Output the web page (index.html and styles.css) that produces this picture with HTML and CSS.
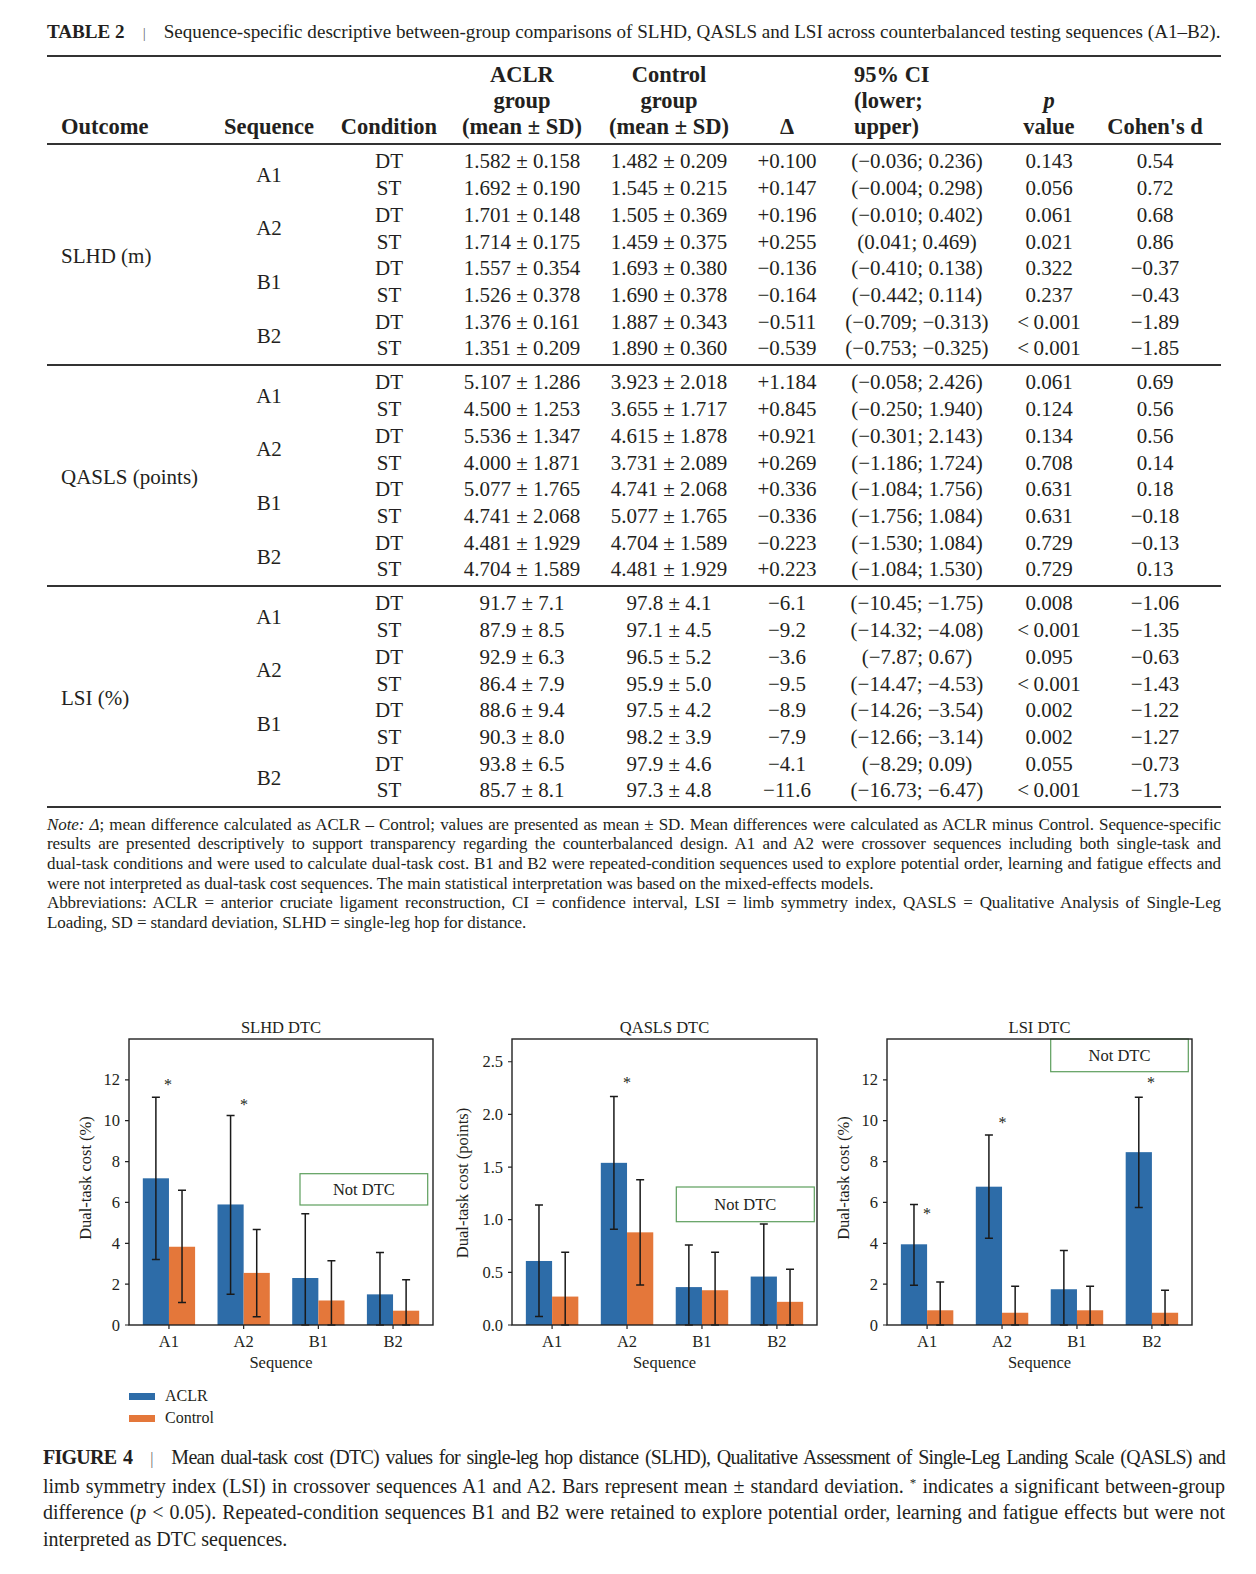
FILE: index.html
```html
<!DOCTYPE html>
<html lang="en">
<head>
<meta charset="utf-8">
<title>Table 2 and Figure 4</title>
<link rel="stylesheet" href="styles.css">
</head>
<body>
<div class="page">
  <section class="table-block">
    <p class="tcap"><b>TABLE 2</b><span class="bar">|</span>Sequence-specific descriptive between-group comparisons of SLHD, QASLS and LSI across counterbalanced testing sequences (A1–B2).</p>
    <table class="data">
      <colgroup>
        <col class="c-out"><col class="c-seq"><col class="c-cond"><col class="c-aclr"><col class="c-ctrl"><col class="c-delta"><col class="c-ci"><col class="c-p"><col class="c-d">
      </colgroup>
      <thead>
        <tr>
          <th class="left">Outcome</th>
          <th>Sequence</th>
          <th>Condition</th>
          <th>ACLR<br>group<br>(mean ± SD)</th>
          <th>Control<br>group<br>(mean ± SD)</th>
          <th>Δ</th>
          <th class="ci-h">95% CI<br>(lower;<br>upper)</th>
          <th><i>p</i><br>value</th>
          <th>Cohen's d</th>
        </tr>
      </thead>
      <tbody>
        <tr><td rowspan="8" class="left">SLHD (m)</td><td rowspan="2">A1</td><td>DT</td><td>1.582 ± 0.158</td><td>1.482 ± 0.209</td><td>+0.100</td><td>(−0.036; 0.236)</td><td>0.143</td><td>0.54</td></tr>
        <tr><td>ST</td><td>1.692 ± 0.190</td><td>1.545 ± 0.215</td><td>+0.147</td><td>(−0.004; 0.298)</td><td>0.056</td><td>0.72</td></tr>
        <tr><td rowspan="2">A2</td><td>DT</td><td>1.701 ± 0.148</td><td>1.505 ± 0.369</td><td>+0.196</td><td>(−0.010; 0.402)</td><td>0.061</td><td>0.68</td></tr>
        <tr><td>ST</td><td>1.714 ± 0.175</td><td>1.459 ± 0.375</td><td>+0.255</td><td>(0.041; 0.469)</td><td>0.021</td><td>0.86</td></tr>
        <tr><td rowspan="2">B1</td><td>DT</td><td>1.557 ± 0.354</td><td>1.693 ± 0.380</td><td>−0.136</td><td>(−0.410; 0.138)</td><td>0.322</td><td>−0.37</td></tr>
        <tr><td>ST</td><td>1.526 ± 0.378</td><td>1.690 ± 0.378</td><td>−0.164</td><td>(−0.442; 0.114)</td><td>0.237</td><td>−0.43</td></tr>
        <tr><td rowspan="2">B2</td><td>DT</td><td>1.376 ± 0.161</td><td>1.887 ± 0.343</td><td>−0.511</td><td>(−0.709; −0.313)</td><td>&lt;&#8201;0.001</td><td>−1.89</td></tr>
        <tr><td>ST</td><td>1.351 ± 0.209</td><td>1.890 ± 0.360</td><td>−0.539</td><td>(−0.753; −0.325)</td><td>&lt;&#8201;0.001</td><td>−1.85</td></tr>
      </tbody>
      <tbody>
        <tr><td rowspan="8" class="left">QASLS (points)</td><td rowspan="2">A1</td><td>DT</td><td>5.107 ± 1.286</td><td>3.923 ± 2.018</td><td>+1.184</td><td>(−0.058; 2.426)</td><td>0.061</td><td>0.69</td></tr>
        <tr><td>ST</td><td>4.500 ± 1.253</td><td>3.655 ± 1.717</td><td>+0.845</td><td>(−0.250; 1.940)</td><td>0.124</td><td>0.56</td></tr>
        <tr><td rowspan="2">A2</td><td>DT</td><td>5.536 ± 1.347</td><td>4.615 ± 1.878</td><td>+0.921</td><td>(−0.301; 2.143)</td><td>0.134</td><td>0.56</td></tr>
        <tr><td>ST</td><td>4.000 ± 1.871</td><td>3.731 ± 2.089</td><td>+0.269</td><td>(−1.186; 1.724)</td><td>0.708</td><td>0.14</td></tr>
        <tr><td rowspan="2">B1</td><td>DT</td><td>5.077 ± 1.765</td><td>4.741 ± 2.068</td><td>+0.336</td><td>(−1.084; 1.756)</td><td>0.631</td><td>0.18</td></tr>
        <tr><td>ST</td><td>4.741 ± 2.068</td><td>5.077 ± 1.765</td><td>−0.336</td><td>(−1.756; 1.084)</td><td>0.631</td><td>−0.18</td></tr>
        <tr><td rowspan="2">B2</td><td>DT</td><td>4.481 ± 1.929</td><td>4.704 ± 1.589</td><td>−0.223</td><td>(−1.530; 1.084)</td><td>0.729</td><td>−0.13</td></tr>
        <tr><td>ST</td><td>4.704 ± 1.589</td><td>4.481 ± 1.929</td><td>+0.223</td><td>(−1.084; 1.530)</td><td>0.729</td><td>0.13</td></tr>
      </tbody>
      <tbody>
        <tr><td rowspan="8" class="left">LSI (%)</td><td rowspan="2">A1</td><td>DT</td><td>91.7 ± 7.1</td><td>97.8 ± 4.1</td><td>−6.1</td><td>(−10.45; −1.75)</td><td>0.008</td><td>−1.06</td></tr>
        <tr><td>ST</td><td>87.9 ± 8.5</td><td>97.1 ± 4.5</td><td>−9.2</td><td>(−14.32; −4.08)</td><td>&lt;&#8201;0.001</td><td>−1.35</td></tr>
        <tr><td rowspan="2">A2</td><td>DT</td><td>92.9 ± 6.3</td><td>96.5 ± 5.2</td><td>−3.6</td><td>(−7.87; 0.67)</td><td>0.095</td><td>−0.63</td></tr>
        <tr><td>ST</td><td>86.4 ± 7.9</td><td>95.9 ± 5.0</td><td>−9.5</td><td>(−14.47; −4.53)</td><td>&lt;&#8201;0.001</td><td>−1.43</td></tr>
        <tr><td rowspan="2">B1</td><td>DT</td><td>88.6 ± 9.4</td><td>97.5 ± 4.2</td><td>−8.9</td><td>(−14.26; −3.54)</td><td>0.002</td><td>−1.22</td></tr>
        <tr><td>ST</td><td>90.3 ± 8.0</td><td>98.2 ± 3.9</td><td>−7.9</td><td>(−12.66; −3.14)</td><td>0.002</td><td>−1.27</td></tr>
        <tr><td rowspan="2">B2</td><td>DT</td><td>93.8 ± 6.5</td><td>97.9 ± 4.6</td><td>−4.1</td><td>(−8.29; 0.09)</td><td>0.055</td><td>−0.73</td></tr>
        <tr><td>ST</td><td>85.7 ± 8.1</td><td>97.3 ± 4.8</td><td>−11.6</td><td>(−16.73; −6.47)</td><td>&lt;&#8201;0.001</td><td>−1.73</td></tr>
      </tbody>
    </table>
    <div class="note">
      <span class="ln j"><i>Note:</i> <i>Δ</i>; mean difference calculated as ACLR – Control; values are presented as mean ± SD. Mean differences were calculated as ACLR minus Control. Sequence-specific</span>
      <span class="ln j">results are presented descriptively to support transparency regarding the counterbalanced design. A1 and A2 were crossover sequences including both single-task and</span>
      <span class="ln j">dual-task conditions and were used to calculate dual-task cost. B1 and B2 were repeated-condition sequences used to explore potential order, learning and fatigue effects and</span>
      <span class="ln">were not interpreted as dual-task cost sequences. The main statistical interpretation was based on the mixed-effects models.</span>
      <span class="ln j">Abbreviations: ACLR = anterior cruciate ligament reconstruction, CI = confidence interval, LSI = limb symmetry index, QASLS = Qualitative Analysis of Single-Leg</span>
      <span class="ln">Loading, SD = standard deviation, SLHD = single-leg hop for distance.</span>
    </div>
  </section>

  <section class="figure">
    <div class="charts">
      <svg class="chart" width="383" height="370" viewBox="0 0 383 370">
        <text class="ttl" x="221" y="22">SLHD DTC</text>
        <g class="bars">
          <rect class="b" x="82.82" y="173.31" width="26.14" height="146.69"/>
          <rect class="o" x="108.96" y="241.75" width="26.14" height="78.25"/>
          <rect class="b" x="157.51" y="199.46" width="26.14" height="120.54"/>
          <rect class="o" x="183.65" y="267.90" width="26.14" height="52.10"/>
          <rect class="b" x="232.21" y="273.01" width="26.14" height="46.99"/>
          <rect class="o" x="258.35" y="295.48" width="26.14" height="24.52"/>
          <rect class="b" x="306.90" y="289.36" width="26.14" height="30.64"/>
          <rect class="o" x="333.04" y="305.70" width="26.14" height="14.30"/>
        </g>
        <g class="err">
          <path d="M95.89 254.62V92.21M91.89 254.62H99.89M91.89 92.21H99.89"/>
          <path d="M122.03 297.53V185.16M118.03 297.53H126.03M118.03 185.16H126.03"/>
          <path d="M170.58 289.36V110.59M166.58 289.36H174.58M166.58 110.59H174.58"/>
          <path d="M196.72 311.83V224.39M192.72 311.83H200.72M192.72 224.39H200.72"/>
          <path d="M245.28 320V208.66M241.28 320H249.28M241.28 208.66H249.28"/>
          <path d="M271.42 320V255.65M267.42 320H275.42M267.42 255.65H275.42"/>
          <path d="M319.97 320V247.47M315.97 320H323.97M315.97 247.47H323.97"/>
          <path d="M346.11 320V274.65M342.11 320H350.11M342.11 274.65H350.11"/>
        </g>
        <text class="star" x="108" y="79">*</text>
        <text class="star" x="184" y="99">*</text>
        <rect class="nd" x="240" y="168.7" width="127.7" height="31.3"/>
        <text class="ndt" x="303.9" y="184.4">Not DTC</text>
        <rect class="spine" x="69" y="34" width="304" height="286"/>
        <g class="ticks">
          <path d="M65 320H69M65 279.14H69M65 238.28H69M65 197.42H69M65 156.56H69M65 115.70H69M65 74.84H69"/>
          <path d="M108.96 320V324M183.65 320V324M258.35 320V324M333.04 320V324"/>
        </g>
        <g class="yl">
          <text x="60" y="320">0</text><text x="60" y="279.14">2</text><text x="60" y="238.28">4</text><text x="60" y="197.42">6</text><text x="60" y="156.56">8</text><text x="60" y="115.70">10</text><text x="60" y="74.84">12</text>
        </g>
        <g class="xl">
          <text x="108.96" y="336">A1</text><text x="183.65" y="336">A2</text><text x="258.35" y="336">B1</text><text x="333.04" y="336">B2</text>
        </g>
        <text class="xlab" x="221" y="357">Sequence</text>
        <text class="ylab" transform="translate(25 173) rotate(-90)">Dual-task cost (%)</text>
      </svg>

      <svg class="chart" width="375" height="370" viewBox="0 0 375 370">
        <text class="ttl" x="221.5" y="22">QASLS DTC</text>
        <g class="bars">
          <rect class="b" x="82.86" y="255.98" width="26.23" height="64.02"/>
          <rect class="o" x="109.09" y="291.57" width="26.23" height="28.43"/>
          <rect class="b" x="157.80" y="157.84" width="26.23" height="162.16"/>
          <rect class="o" x="184.03" y="227.34" width="26.23" height="92.66"/>
          <rect class="b" x="232.74" y="282.09" width="26.23" height="37.91"/>
          <rect class="o" x="258.97" y="285.25" width="26.23" height="34.75"/>
          <rect class="b" x="307.68" y="271.56" width="26.23" height="48.44"/>
          <rect class="o" x="333.91" y="296.83" width="26.23" height="23.17"/>
        </g>
        <g class="err">
          <path d="M95.98 311.58V199.96M91.98 311.58H99.98M91.98 199.96H99.98"/>
          <path d="M122.2 320V247.34M118.2 320H126.2M118.2 247.34H126.2"/>
          <path d="M170.92 224.18V91.50M166.92 224.18H174.92M166.92 91.50H174.92"/>
          <path d="M197.15 279.99V174.69M193.15 279.99H201.15M193.15 174.69H201.15"/>
          <path d="M245.86 320V239.97M241.86 320H249.86M241.86 239.97H249.86"/>
          <path d="M272.09 320V247.34M268.09 320H276.09M268.09 247.34H276.09"/>
          <path d="M320.80 320V218.91M316.80 320H324.80M316.80 218.91H324.80"/>
          <path d="M347.03 320V264.19M343.03 320H351.03M343.03 264.19H351.03"/>
        </g>
        <text class="star" x="184" y="77">*</text>
        <rect class="nd" x="233.3" y="182" width="138" height="34.7"/>
        <text class="ndt" x="302.3" y="199.3">Not DTC</text>
        <rect class="spine" x="69" y="34" width="305" height="286"/>
        <g class="ticks">
          <path d="M65 320H69M65 267.35H69M65 214.7H69M65 162.05H69M65 109.4H69M65 56.75H69"/>
          <path d="M109.09 320V324M184.03 320V324M258.97 320V324M333.91 320V324"/>
        </g>
        <g class="yl">
          <text x="60" y="320">0.0</text><text x="60" y="267.35">0.5</text><text x="60" y="214.7">1.0</text><text x="60" y="162.05">1.5</text><text x="60" y="109.4">2.0</text><text x="60" y="56.75">2.5</text>
        </g>
        <g class="xl">
          <text x="109.09" y="336">A1</text><text x="184.03" y="336">A2</text><text x="258.97" y="336">B1</text><text x="333.91" y="336">B2</text>
        </g>
        <text class="xlab" x="221.5" y="357">Sequence</text>
        <text class="ylab" transform="translate(19 178) rotate(-90)">Dual-task cost (points)</text>
      </svg>

      <svg class="chart" width="390" height="370" viewBox="0 0 390 370">
        <text class="ttl" x="221.5" y="22">LSI DTC</text>
        <g class="bars">
          <rect class="b" x="82.86" y="239.30" width="26.23" height="80.70"/>
          <rect class="o" x="109.09" y="305.29" width="26.23" height="14.71"/>
          <rect class="b" x="157.80" y="181.69" width="26.23" height="138.31"/>
          <rect class="o" x="184.03" y="307.74" width="26.23" height="12.26"/>
          <rect class="b" x="232.74" y="284.25" width="26.23" height="35.75"/>
          <rect class="o" x="258.97" y="305.29" width="26.23" height="14.71"/>
          <rect class="b" x="307.68" y="147.16" width="26.23" height="172.84"/>
          <rect class="o" x="333.91" y="307.74" width="26.23" height="12.26"/>
        </g>
        <g class="err">
          <path d="M95.98 280.16V199.46M91.98 280.16H99.98M91.98 199.46H99.98"/>
          <path d="M122.2 320V277.10M118.2 320H126.2M118.2 277.10H126.2"/>
          <path d="M170.92 233.17V130.0M166.92 233.17H174.92M166.92 130.0H174.92"/>
          <path d="M197.15 320V281.18M193.15 320H201.15M193.15 281.18H201.15"/>
          <path d="M245.86 320V245.43M241.86 320H249.86M241.86 245.43H249.86"/>
          <path d="M272.09 320V281.18M268.09 320H276.09M268.09 281.18H276.09"/>
          <path d="M320.80 202.53V92.21M316.80 202.53H324.80M316.80 92.21H324.80"/>
          <path d="M347.03 320V285.27M343.03 320H351.03M343.03 285.27H351.03"/>
        </g>
        <text class="star" x="109" y="208">*</text>
        <text class="star" x="184.5" y="117">*</text>
        <text class="star" x="333" y="77">*</text>
        <rect class="nd" x="232.7" y="34" width="137.6" height="32.7"/>
        <text class="ndt" x="301.5" y="50.3">Not DTC</text>
        <rect class="spine" x="69" y="34" width="305" height="286"/>
        <g class="ticks">
          <path d="M65 320H69M65 279.14H69M65 238.28H69M65 197.42H69M65 156.56H69M65 115.70H69M65 74.84H69"/>
          <path d="M109.09 320V324M184.03 320V324M258.97 320V324M333.91 320V324"/>
        </g>
        <g class="yl">
          <text x="60" y="320">0</text><text x="60" y="279.14">2</text><text x="60" y="238.28">4</text><text x="60" y="197.42">6</text><text x="60" y="156.56">8</text><text x="60" y="115.70">10</text><text x="60" y="74.84">12</text>
        </g>
        <g class="xl">
          <text x="109.09" y="336">A1</text><text x="184.03" y="336">A2</text><text x="258.97" y="336">B1</text><text x="333.91" y="336">B2</text>
        </g>
        <text class="xlab" x="221.5" y="357">Sequence</text>
        <text class="ylab" transform="translate(25 173) rotate(-90)">Dual-task cost (%)</text>
      </svg>
    </div>

    <div class="legend">
      <div class="item"><span class="sw sw-b"></span><span>ACLR</span></div>
      <div class="item"><span class="sw sw-o"></span><span>Control</span></div>
    </div>

    <div class="fcap">
      <span class="ln j tight"><b>FIGURE 4</b><span class="bar">|</span>Mean dual-task cost (DTC) values for single-leg hop distance (SLHD), Qualitative Assessment of Single-Leg Landing Scale (QASLS) and</span>
      <span class="ln j">limb symmetry index (LSI) in crossover sequences A1 and A2. Bars represent mean ± standard deviation. <sup>*</sup> indicates a significant between-group</span>
      <span class="ln j">difference (<i>p</i> &lt; 0.05). Repeated-condition sequences B1 and B2 were retained to explore potential order, learning and fatigue effects but were not</span>
      <span class="ln">interpreted as DTC sequences.</span>
    </div>
  </section>
</div>
</body>
</html>
```

FILE: styles.css
```css
html, body {
  margin: 0;
  padding: 0;
  background: #ffffff;
}

body {
  color: #231f20;
  font-family: "Liberation Serif", "Times New Roman", serif;
}

.page {
  width: 1256px;
}

/* ---------- table ---------- */
.table-block {
  padding: 0 35px 0 47px;
}

.tcap {
  margin: 20px 0 10px;
  font-size: 19.1px;
  line-height: 24px;
  white-space: nowrap;
}

.bar {
  display: inline-block;
  margin: 0 18px;
  color: #6a6a6a;
  font-weight: normal;
  font-size: 0.8em;
  letter-spacing: 0;
}

.data {
  width: 1174px;
  table-layout: fixed;
  border-collapse: separate;
  border-spacing: 0;
  font-size: 21px;
  border-top: 2px solid #333;
  border-bottom: 2px solid #333;
}

.c-out { width: 168px; }
.c-seq { width: 108px; }
.c-cond { width: 132px; }
.c-aclr { width: 134px; }
.c-ctrl { width: 160px; }
.c-delta { width: 76px; }
.c-ci { width: 184px; }
.c-p { width: 80px; }
.c-d { width: 132px; }

.data th {
  font-weight: bold;
  font-size: 22.5px;
  line-height: 26.3px;
  padding: 4.5px 0 2.3px;
  vertical-align: bottom;
  text-align: center;
  white-space: nowrap;
  border-bottom: 2px solid #333;
}

.data th.ci-h {
  text-align: left;
  padding-left: 29px;
}

.data td {
  line-height: 26.7px;
  padding: 0;
  text-align: center;
  vertical-align: middle;
  white-space: nowrap;
}

.data .left {
  text-align: left;
  padding-left: 14px;
}

.data tbody tr:first-child td {
  padding-top: 3.75px;
}

.data tbody tr:last-child td {
  padding-bottom: 1.65px;
}

.data tbody + tbody tr:first-child td {
  border-top: 2px solid #333;
}

/* ---------- notes ---------- */
.note {
  margin-top: 7px;
  font-size: 17px;
  letter-spacing: -0.1px;
  line-height: 19.6px;
}

.ln {
  display: block;
}

.j {
  text-align: justify;
  text-align-last: justify;
}

/* ---------- figure ---------- */
.charts {
  display: flex;
  padding-left: 60px;
  margin-top: 73px;
}

.chart {
  display: block;
  flex: none;
}

.chart text {
  font-family: "Liberation Serif", "Times New Roman", serif;
  font-size: 16.5px;
  fill: #231f20;
  dominant-baseline: central;
}

.chart .ttl,
.chart .xl text,
.chart .xlab,
.chart .ylab,
.chart .ndt,
.chart .star {
  text-anchor: middle;
}

.chart .yl text {
  text-anchor: end;
}

.chart .star {
  font-size: 16px;
}

.chart .b { fill: #2d6ca8; }
.chart .o { fill: #e4773a; }

.chart .err path {
  fill: none;
  stroke: #1a1a1a;
  stroke-width: 1.5;
}

.chart .spine {
  fill: none;
  stroke: #222;
  stroke-width: 1.4;
}

.chart .ticks path {
  fill: none;
  stroke: #222;
  stroke-width: 1.2;
}

.chart .nd {
  fill: #fff;
  stroke: #5c9e5c;
  stroke-width: 1.2;
}

.legend {
  margin-top: 10px;
  padding-left: 129px;
  display: flex;
  flex-direction: column;
  font-size: 16px;
  line-height: 22px;
}

.legend .item {
  display: flex;
  align-items: center;
  gap: 10px;
}

.sw {
  display: block;
  width: 26px;
  height: 7px;
}

.sw-b { background: #2d6ca8; }
.sw-o { background: #e4773a; }

.fcap {
  margin-top: 14.5px;
  padding-left: 43px;
  width: 1182px;
  font-size: 20px;
  line-height: 26.7px;
}

.fcap .tight {
  letter-spacing: -0.75px;
}

.fcap sup {
  font-size: 0.65em;
  line-height: 0;
  vertical-align: 0.5em;
}
```
